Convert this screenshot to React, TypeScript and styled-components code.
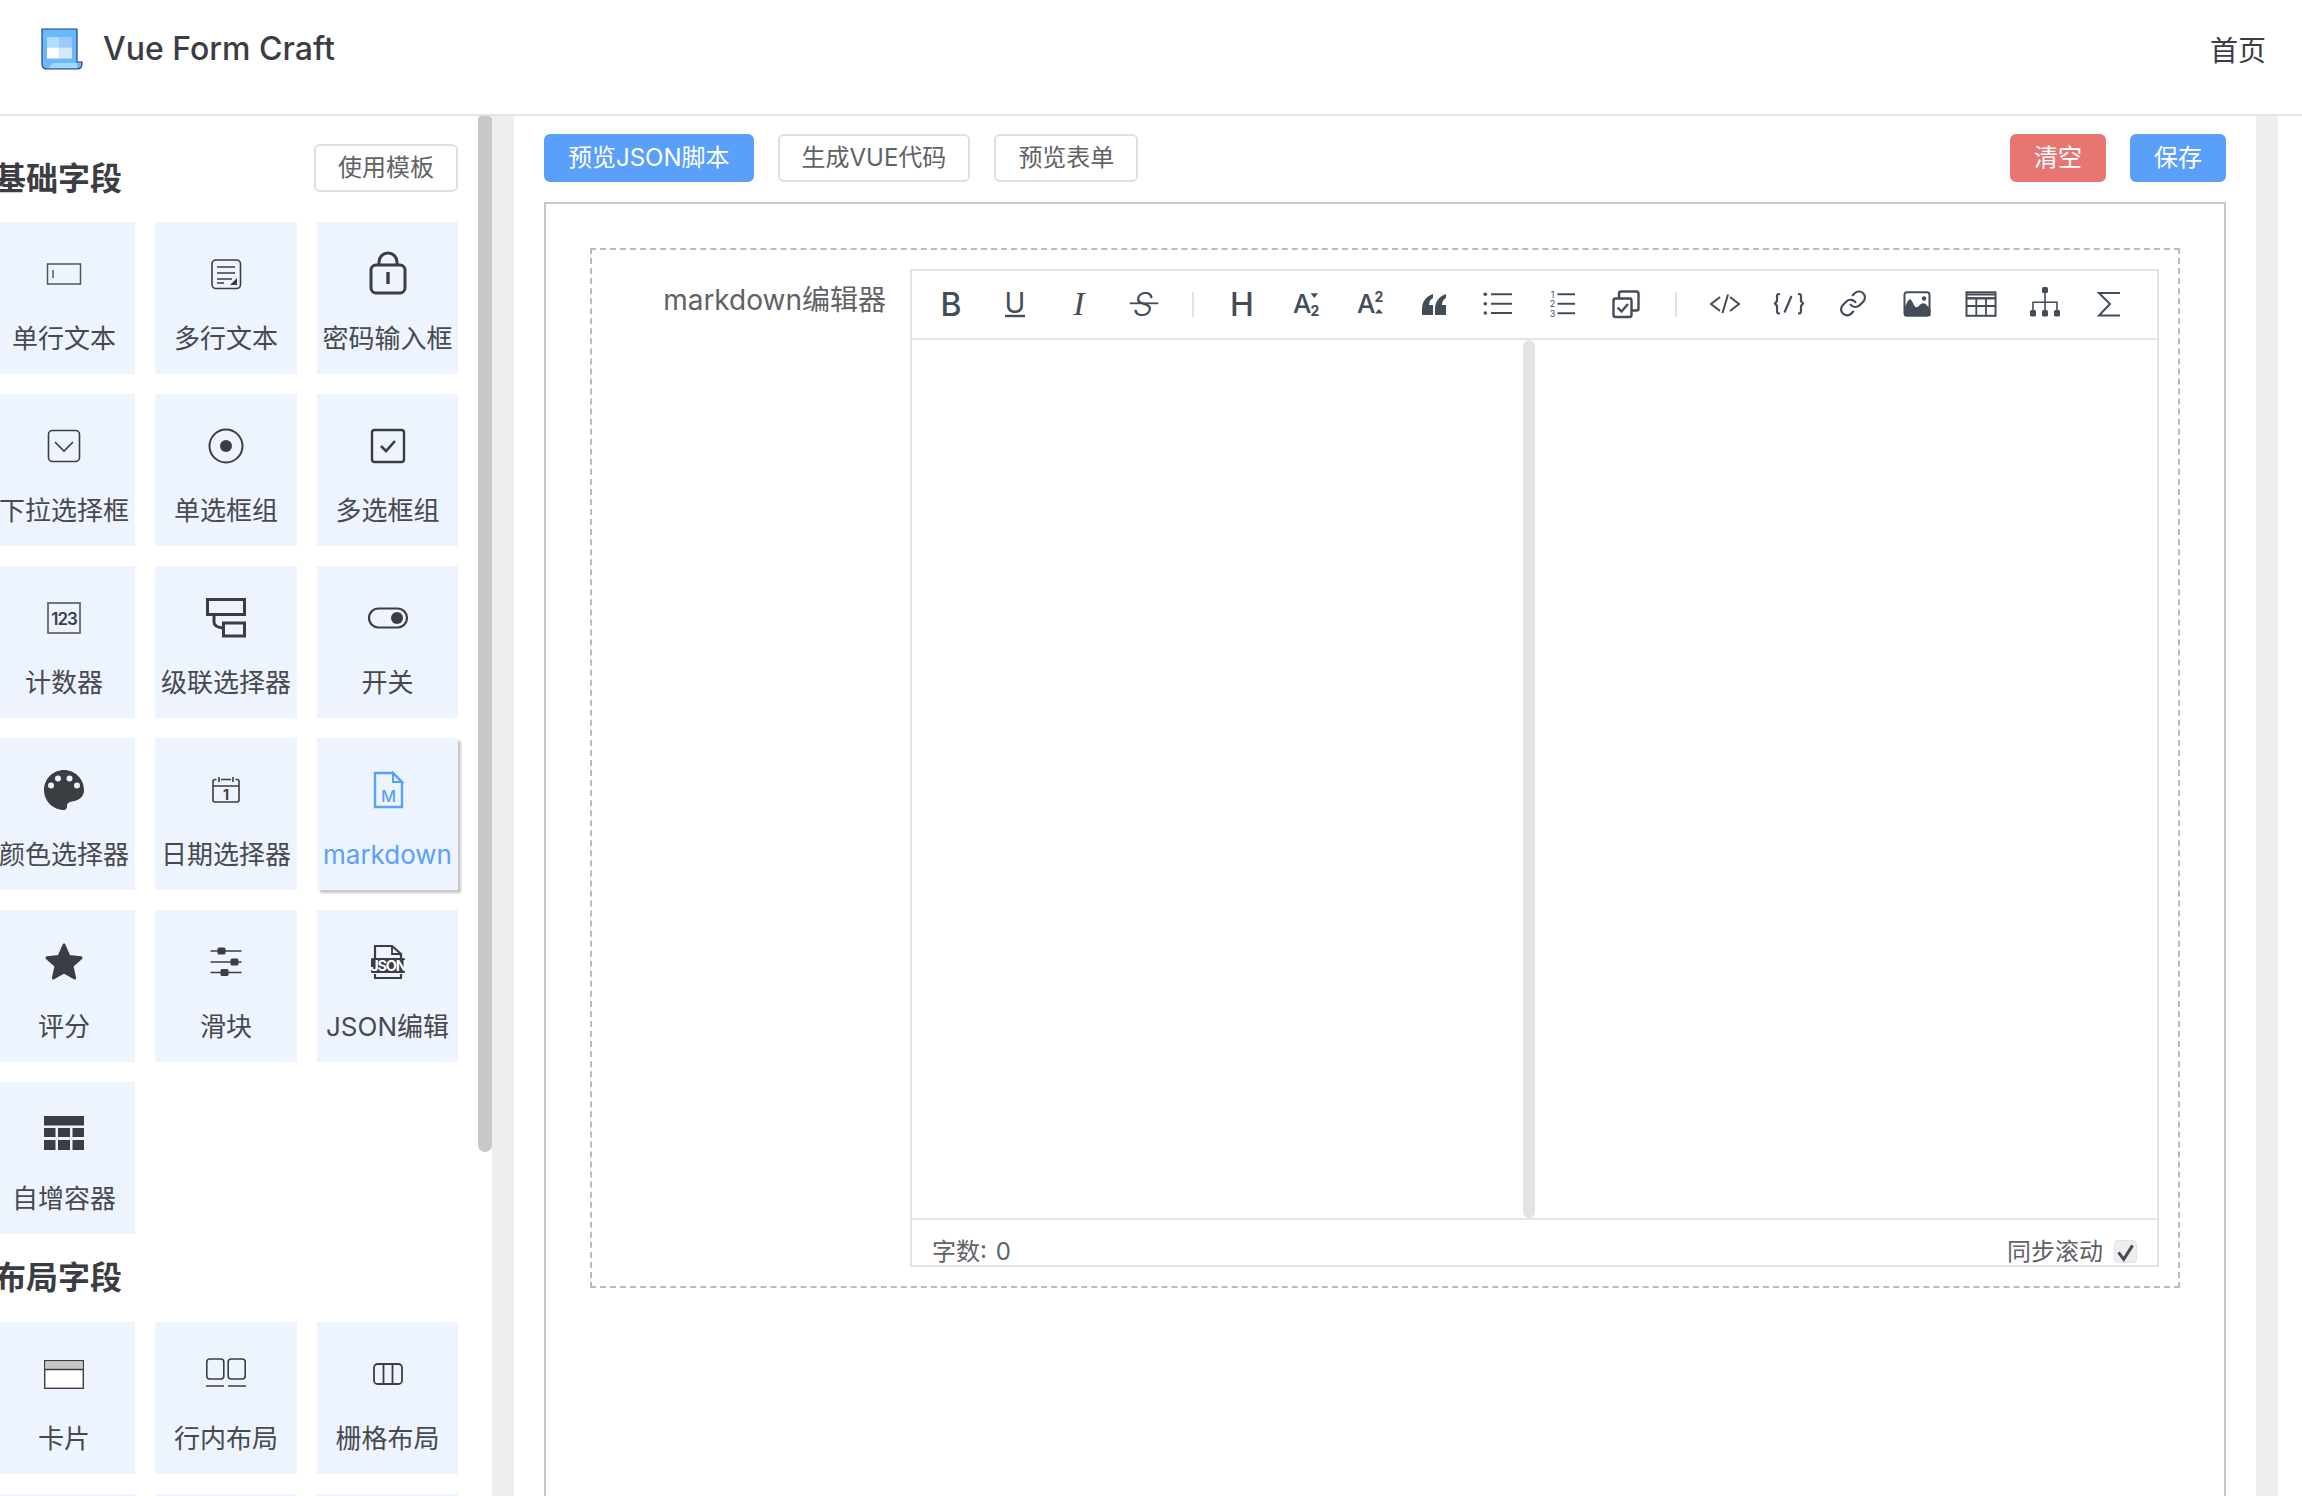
import React from 'react'
import styled, { createGlobalStyle } from 'styled-components'

const GlobalStyle = createGlobalStyle`
  html, body {
    margin: 0;
    padding: 0;
    height: 100%;
    overflow: hidden;
    background: #fff;
    font-family: Inter, "Noto Sans CJK SC", sans-serif;
  }
  * { box-sizing: border-box; }
`

const INK = '#3c3d43'
const TOOL = '#434d58'
const BLUE = '#5aa0fa'
const CARD = '#edf4fe'

// ---- card icons, all in a 48 box ----
const Logo = () => (
  <svg width="42" height="42" viewBox="0 0 42 42">
    <path d="M1 1H36V34H41V36Q41 41 36 41H6Q1 41 1 36Z" fill="#6bb9fd" stroke="#1d3f85" strokeWidth="1.2" />
    <path d="M12 35H36V40H8Q10 36 12 35Z" fill="#a9d6ff" />
    <rect x="6" y="9" width="12.5" height="10.5" fill="#b2dcff" />
    <rect x="18.5" y="9" width="12.5" height="10.5" fill="#9fc9fd" />
    <rect x="6" y="19.5" width="12.5" height="11" fill="#fff" />
    <rect x="18.5" y="19.5" width="12.5" height="11" fill="#d6e7ff" />
  </svg>
)

const cardIcons: Record<string, React.ReactNode> = {
  input: (
    <>
      <rect x="7.5" y="14" width="33" height="20" fill="none" stroke="#55565c" strokeWidth="1.5" />
      <path d="M13 20V28" stroke="#55565c" strokeWidth="1.5" />
    </>
  ),
  textarea: (
    <>
      <rect x="10" y="10" width="28.5" height="28.5" rx="4" fill="none" stroke={INK} strokeWidth="1.6" />
      <path d="M15 17H33M15 23H33M15 29H30M15 33H22" stroke={INK} strokeWidth="1.6" fill="none" />
      <path d="M35 28V35H28Z" fill={INK} />
    </>
  ),
  password: (
    <>
      <rect x="7" y="15" width="34" height="28" rx="5" fill="none" stroke={INK} strokeWidth="3" />
      <path d="M15 15V12A9 9 0 0 1 33 12V15" fill="none" stroke={INK} strokeWidth="3" />
      <path d="M24 22V34" stroke={INK} strokeWidth="3.4" />
    </>
  ),
  select: (
    <>
      <rect x="8.5" y="8.5" width="31" height="31" rx="4" fill="none" stroke={INK} strokeWidth="1.6" />
      <path d="M15 20L24 29L33 20" fill="none" stroke={INK} strokeWidth="1.6" />
    </>
  ),
  radio: (
    <>
      <circle cx="24" cy="24" r="16.5" fill="none" stroke={INK} strokeWidth="2" />
      <circle cx="24" cy="24" r="6" fill={INK} />
    </>
  ),
  checkbox: (
    <>
      <rect x="8" y="8" width="32" height="32" rx="2.5" fill="none" stroke={INK} strokeWidth="2.4" />
      <path d="M17 24L22 29L31 19" fill="none" stroke={INK} strokeWidth="2.6" />
    </>
  ),
  number: (
    <>
      <rect x="8" y="9" width="32" height="30" fill="none" stroke="#55565c" strokeWidth="1.6" />
      <text x="24" y="30.5" textAnchor="middle" fontSize="17" fontWeight="600" letterSpacing="-1" fill={INK}>123</text>
    </>
  ),
  cascader: (
    <>
      <rect x="5.5" y="5.5" width="37" height="15" fill="none" stroke={INK} strokeWidth="3" />
      <rect x="21.5" y="29" width="21" height="13" fill="none" stroke={INK} strokeWidth="3" />
      <path d="M12 21V28Q12 33 21 34" fill="none" stroke={INK} strokeWidth="3" />
    </>
  ),
  switch: (
    <>
      <rect x="5" y="14.5" width="38" height="19" rx="9.5" fill="none" stroke={INK} strokeWidth="2.2" />
      <circle cx="33" cy="24" r="6" fill={INK} />
    </>
  ),
  color: (
    <g transform="translate(24 24)">
      <path d="M0-20C-11-20-20-11-20 0C-20 11-11 20 0 20C2 20 3 18 3 16.5C3 13 5 12 8 11.5C15 10.5 20 7 20 0C20-11 11-20 0-20Z" fill={INK} />
      <circle cx="-13" cy="-4.5" r="3" fill={CARD} />
      <circle cx="-6" cy="-11.5" r="3" fill={CARD} />
      <circle cx="5.5" cy="-11.5" r="3" fill={CARD} />
      <circle cx="13" cy="-4.5" r="3" fill={CARD} />
    </g>
  ),
  date: (
    <>
      <path d="M14.5 13.5H13Q11 13.5 11 15.5V34Q11 36 13 36H35Q37 36 37 34V15.5Q37 13.5 35 13.5H33.5M19 13.5H29M11 20H37M17 11V16M31 11V16" fill="none" stroke={INK} strokeWidth="1.6" />
      <text x="24" y="33.5" textAnchor="middle" fontSize="14" fontWeight="700" fill={INK}>1</text>
    </>
  ),
  markdown: (
    <>
      <path d="M11 7H29L38 16V41H11Z" fill="none" stroke={BLUE} strokeWidth="2.4" />
      <path d="M29 7V16H38Z" fill="none" stroke={BLUE} strokeWidth="2" />
      <text x="24.5" y="36" textAnchor="middle" fontSize="16.5" fontWeight="500" fill={BLUE}>M</text>
    </>
  ),
  rate: (
    <path d="M24 7L29 18.5L41 19.8L32 28L34.6 40L24 34L13.4 40L16 28L7 19.8L19 18.5Z" fill={INK} stroke={INK} strokeWidth="3" strokeLinejoin="round" />
  ),
  slider: (
    <>
      <path d="M8.5 13H39.5M8.5 24H39.5M8.5 34.5H39.5" stroke={INK} strokeWidth="1.6" />
      <rect x="15.5" y="9.5" width="8" height="7" rx="1.5" fill={INK} />
      <rect x="28.5" y="20.5" width="8" height="7" rx="1.5" fill={INK} />
      <rect x="18.5" y="31" width="8" height="7" rx="1.5" fill={INK} />
    </>
  ),
  json: (
    <>
      <path d="M11 20V8H28L37 16V20M11 36V40H37V36" fill="none" stroke={INK} strokeWidth="2.2" />
      <path d="M28 8V16H37" fill="none" stroke={INK} strokeWidth="1.8" />
      <rect x="7" y="20" width="34" height="15" rx="1.5" fill={INK} />
      <text x="24" y="32.5" textAnchor="middle" fontSize="14.5" fontWeight="700" letterSpacing="-1.2" fill="#fff">JSON</text>
    </>
  ),
  group: (
    <>
      <rect x="4" y="6" width="40" height="9.5" fill={INK} />
      <rect x="4" y="18" width="11.5" height="9" fill={INK} />
      <rect x="18" y="18" width="12" height="9" fill={INK} />
      <rect x="32.5" y="18" width="11.5" height="9" fill={INK} />
      <rect x="4" y="30" width="11.5" height="10" fill={INK} />
      <rect x="18" y="30" width="12" height="10" fill={INK} />
      <rect x="32.5" y="30" width="11.5" height="10" fill={INK} />
    </>
  ),
  card: (
    <>
      <rect x="4.7" y="10.7" width="38.6" height="27.6" fill="#fff" stroke={INK} strokeWidth="1.4" />
      <rect x="5.4" y="11.4" width="37.2" height="7.6" fill="#c6c7c9" />
      <path d="M5 19.5H43" stroke={INK} strokeWidth="1.4" />
    </>
  ),
  inline: (
    <>
      <rect x="4.8" y="9" width="17" height="20" rx="3" fill="none" stroke={INK} strokeWidth="1.6" />
      <rect x="26.2" y="9" width="17" height="20" rx="3" fill="none" stroke={INK} strokeWidth="1.6" />
      <path d="M4 36H22M26 36H44" stroke={INK} strokeWidth="1.6" />
    </>
  ),
  grid: (
    <>
      <rect x="10" y="14" width="28" height="20" rx="3.5" fill="none" stroke={INK} strokeWidth="1.8" />
      <path d="M19.5 14V34M28.5 14V34" stroke={INK} strokeWidth="1.8" />
    </>
  ),
}

const basicFields = [
  { id: 'input', label: '单行文本' },
  { id: 'textarea', label: '多行文本' },
  { id: 'password', label: '密码输入框' },
  { id: 'select', label: '下拉选择框' },
  { id: 'radio', label: '单选框组' },
  { id: 'checkbox', label: '多选框组' },
  { id: 'number', label: '计数器' },
  { id: 'cascader', label: '级联选择器' },
  { id: 'switch', label: '开关' },
  { id: 'color', label: '颜色选择器' },
  { id: 'date', label: '日期选择器' },
  { id: 'markdown', label: 'markdown', active: true },
  { id: 'rate', label: '评分' },
  { id: 'slider', label: '滑块' },
  { id: 'json', label: 'JSON编辑' },
  { id: 'group', label: '自增容器' },
]

const layoutFields = [
  { id: 'card', label: '卡片' },
  { id: 'inline', label: '行内布局' },
  { id: 'grid', label: '栅格布局' },
]

// ---- editor toolbar icons, drawn around the middle of a 40 box ----
const line = { fill: 'none', stroke: TOOL, strokeWidth: 2 }

const toolGroups: React.ReactNode[][] = [
  [
    <text x="20" y="30.7" textAnchor="middle" fontSize="32" fontWeight="500" fill={TOOL}>B</text>,
    <>
      <text x="20" y="27.6" textAnchor="middle" fontSize="28" fontWeight="400" fill={TOOL}>U</text>
      <path d="M10 31H30" stroke={TOOL} strokeWidth="2.4" />
    </>,
    <text x="20" y="30" textAnchor="middle" fontSize="34" fontStyle="italic" fontFamily="'Liberation Serif', serif" fill={TOOL}>I</text>,
    <>
      <text x="20" y="31" textAnchor="middle" fontSize="32" fontStyle="italic" fontWeight="300" fill={TOOL}>S</text>
      <path d="M6.700 18.300H35.300" stroke={TOOL} strokeWidth="1.800" />
    </>,
  ],
  [
    <text x="20" y="30.7" textAnchor="middle" fontSize="32" fontWeight="500" fill={TOOL}>H</text>,
    <>
      <text x="7" y="28" fontSize="26" fontWeight="500" fill={TOOL}>A</text>
      <text x="24.500" y="30.700" fontSize="14" fontWeight="700" fill={TOOL}>2</text>
      <path d="M24.700 8.300H32L28.350 13Z" fill={TOOL} />
    </>,
    <>
      <text x="7" y="28" fontSize="26" fontWeight="500" fill={TOOL}>A</text>
      <text x="24.500" y="17" fontSize="14" fontWeight="700" fill={TOOL}>2</text>
      <path d="M25 28.500H33L29 24Z" fill={TOOL} />
    </>,
    <g transform="translate(20 20)">
      <path d="M-1-11C-7-9-12-4-12 4V10H-1V0H-5C-5-4-3-6-1-7Z" fill={TOOL} />
      <path d="M12-11C6-9 1-4 1 4V10H12V0H8C8-4 10-6 12-7Z" fill={TOOL} />
    </g>,
    <g transform="translate(20 20)">
      <circle cx="-12.700" cy="-10.700" r="1.800" fill={TOOL} />
      <circle cx="-12.700" cy="-1.300" r="1.800" fill={TOOL} />
      <circle cx="-12.700" cy="8" r="1.800" fill={TOOL} />
      <path d="M-7-10.700H14M-7-1.300H14M-7 8H14" {...line} />
    </g>,
    <g transform="translate(20 20)">
      <text x="-9.500" y="-7.500" textAnchor="middle" fontSize="9" fill={TOOL}>1</text>
      <text x="-9.500" y="2" textAnchor="middle" fontSize="9" fill={TOOL}>2</text>
      <text x="-9.500" y="11.500" textAnchor="middle" fontSize="9" fill={TOOL}>3</text>
      <path d="M-4.500-10.700H13M-4.500-1.300H13M-4.500 8.300H13" {...line} />
    </g>,
    <g transform="translate(20 20)" fill="none" stroke={TOOL} strokeWidth="2.400">
      <rect x="-12.500" y="-6.500" width="18" height="18.500" rx="2" />
      <path d="M-7-7V-11.500Q-7-13.500-5-13.500H10.500Q12.500-13.500 12.500-11.500V3.500Q12.500 5.500 10.500 5.500H6" />
      <path d="M-8.500 2.500L-4.500 6.500L2-1" />
    </g>,
  ],
  [
    <g transform="translate(20 20)" {...line}>
      <path d="M-5-8L-14-1L-5 6M5-8L14-1L5 6M3-10.500L-2.500 8" />
    </g>,
    <g transform="translate(20 20)" {...line} strokeWidth="2.200">
      <path d="M-9-11H-10Q-12-11-12-9V-4L-14-1.500L-12 1V6Q-12 8.500-10 8.500H-9M9-11H10Q12-11 12-9V-4L14-1.500L12 1V6Q12 8.500 10 8.500H9M2.500-9L-4.500 7.500" />
    </g>,
    <g transform="translate(5.600 4) scale(1.2)" fill="none" stroke={TOOL} strokeWidth="1.800" strokeLinecap="round">
      <path d="M10 13a5 5 0 0 0 7.54.54l3-3a5 5 0 0 0-7.07-7.07l-1.72 1.71" />
      <path d="M14 11a5 5 0 0 0-7.54-.54l-3 3a5 5 0 0 0 7.07 7.07l1.71-1.71" />
    </g>,
    <g transform="translate(20 20)">
      <rect x="-12.500" y="-12.700" width="25" height="23.500" rx="2.500" fill="none" stroke={TOOL} strokeWidth="2" />
      <path d="M-13 4C-11 0-9-5.700-7-5.700C-5-5.700-3 2.300-.7 2.300C2 2.300 3-1.700 6-1.700C9-1.700 11 2 13.500 4.300V11H-13Z" fill={TOOL} />
      <circle cx="7" cy="-6.500" r="2.200" fill={TOOL} />
    </g>,
    <g transform="translate(20 20)" fill="none" stroke={TOOL}>
      <rect x="-14.500" y="-12.700" width="29" height="23.500" strokeWidth="2" />
      <path d="M-14-6.700H14.500" strokeWidth="2.400" />
      <path d="M-14 1H14.500M-4.700-6.700V11M5-6.700V11" strokeWidth="1.800" />
      <path d="M-14-10.500H14.500" strokeWidth="2" />
    </g>,
    <g transform="translate(20 20)">
      <path d="M0-12V8M-12 6V-2.700H12V6" fill="none" stroke={TOOL} strokeWidth="1.600" />
      <rect x="-3" y="-18" width="6" height="6" rx="1.500" fill={TOOL} />
      <rect x="-15" y="5" width="6" height="6.500" rx="1.500" fill={TOOL} />
      <rect x="-3" y="5" width="6" height="6.500" rx="1.500" fill={TOOL} />
      <rect x="9" y="5" width="6" height="6.500" rx="1.500" fill={TOOL} />
    </g>,
    <g transform="translate(20 20)">
      <path d="M11-12H-10L1-1L-10 10.500H11" {...line} />
    </g>,
  ],
]

const App = () => (
  <>
    <GlobalStyle />
    <Page>
      <Header>
        <Logo />
        <Title>Vue Form Craft</Title>
        <HomeLink>首页</HomeLink>
      </Header>
      <Body>
        <Sidebar>
          <SidebarInner>
            <SectionHead>
              <SectionTitle>基础字段</SectionTitle>
              <Button>使用模板</Button>
            </SectionHead>
            <FieldGrid>
              {basicFields.map((f) => (
                <FieldCard key={f.id} $active={f.active}>
                  <svg width="48" height="48" viewBox="0 0 48 48">{cardIcons[f.id]}</svg>
                  <FieldLabel>{f.label}</FieldLabel>
                </FieldCard>
              ))}
            </FieldGrid>
            <LayoutTitle>布局字段</LayoutTitle>
            <FieldGrid>
              {layoutFields.map((f) => (
                <FieldCard key={f.id}>
                  <svg width="48" height="48" viewBox="0 0 48 48">{cardIcons[f.id]}</svg>
                  <FieldLabel>{f.label}</FieldLabel>
                </FieldCard>
              ))}
              <FieldCard />
              <FieldCard />
              <FieldCard />
            </FieldGrid>
          </SidebarInner>
          <ScrollThumb />
        </Sidebar>
        <Gutter />
        <Main>
          <ActionBar>
            <ActionGroup>
              <Button $tone="primary">预览JSON脚本</Button>
              <Button>生成VUE代码</Button>
              <Button>预览表单</Button>
            </ActionGroup>
            <ActionGroup>
              <Button $tone="danger">清空</Button>
              <Button $tone="primary">保存</Button>
            </ActionGroup>
          </ActionBar>
          <Canvas>
            <FormItem>
              <ItemLabel>markdown编辑器</ItemLabel>
              <Editor>
                <EditorToolbar>
                  {toolGroups.map((group, i) => (
                    <React.Fragment key={i}>
                      {group.map((icon, j) => (
                        <ToolButton key={j}>
                          <svg width="40" height="40" viewBox="0 0 40 40">{icon}</svg>
                        </ToolButton>
                      ))}
                      <ToolSeparator />
                    </React.Fragment>
                  ))}
                </EditorToolbar>
                <EditorBody>
                  <EditPane />
                  <SplitBar />
                </EditorBody>
                <EditorFooter>
                  <WordCount>字数: 0</WordCount>
                  <SyncScroll>
                    同步滚动
                    <SyncCheck>
                      <svg width="21" height="21" viewBox="0 0 24 24">
                        <path d="M4 13L10 21L20 5" fill="none" stroke={TOOL} strokeWidth="3.400" />
                      </svg>
                    </SyncCheck>
                  </SyncScroll>
                </EditorFooter>
              </Editor>
            </FormItem>
          </Canvas>
        </Main>
        <Gutter />
        <RightEdge />
      </Body>
    </Page>
  </>
)

const Page = styled.div`
  width: 2302px;
  height: 1496px;
  display: flex;
  flex-direction: column;
  overflow: hidden;
  color: ${INK};
`
const Header = styled.header`
  flex: 0 0 116px;
  display: flex;
  align-items: flex-start;
  padding: 28px 36px 0 41px;
  border-bottom: 2px solid #e4e4e4;
`
const Title = styled.div`
  margin-left: 20px;
  font-size: 32px;
  line-height: 42px;
  font-weight: 500;
`
const HomeLink = styled.a`
  margin-left: auto;
  font-size: 28px;
  line-height: 46px;
`
const Body = styled.div`
  flex: 1;
  display: flex;
  min-height: 0;
`
const Sidebar = styled.aside`
  position: relative;
  flex: 0 0 492px;
  overflow: hidden;
`
const SidebarInner = styled.div`
  width: 465px;
  margin-left: -7px;
`
const ScrollThumb = styled.div`
  position: absolute;
  top: 0;
  right: 0;
  width: 14px;
  height: 1036px;
  background: #c8c8c8;
  border-radius: 4px 4px 8px 8px;
`
const SectionHead = styled.div`
  height: 106px;
  padding-top: 28px;
  display: flex;
  align-items: flex-start;
  justify-content: space-between;
`
const SectionTitle = styled.h3`
  margin: 13px 0 0 1px;
  font-size: 32px;
  line-height: 44px;
  font-weight: 600;
`
const LayoutTitle = styled(SectionTitle)`
  margin: 22px 0 22px 1px;
`
const FieldGrid = styled.div`
  display: grid;
  grid-template-columns: 142px 142px 141px;
  gap: 20px;
`
const FieldCard = styled.div<{ $active?: boolean }>`
  height: 152px;
  padding-top: 28px;
  display: flex;
  flex-direction: column;
  align-items: center;
  background: ${CARD};
  color: ${(p) => (p.$active ? BLUE : '#48494f')};
  box-shadow: ${(p) => (p.$active ? '3px 3px 2px rgba(0, 0, 0, 0.22)' : 'none')};
`
const FieldLabel = styled.div`
  margin-top: 23px;
  font-size: 26px;
  line-height: 36px;
  white-space: nowrap;
`
const Gutter = styled.div`
  flex: 0 0 22px;
  background: #eeeeee;
`
const RightEdge = styled.div`
  flex: 1;
`
const Main = styled.main`
  flex: 0 0 1742px;
  min-width: 0;
  padding: 18px 30px 0;
  display: flex;
  flex-direction: column;
  min-height: 0;
`
const ActionBar = styled.div`
  display: flex;
  justify-content: space-between;
`
const ActionGroup = styled.div`
  display: flex;
  gap: 24px;
`
const toneColor = { primary: BLUE, danger: '#e77672' }
const Button = styled.button<{ $tone?: 'primary' | 'danger' }>`
  height: 48px;
  padding: 0 22px;
  font-family: inherit;
  font-size: 24px;
  line-height: 44px;
  border-radius: 6px;
  border: 2px solid ${(p) => (p.$tone ? toneColor[p.$tone] : '#dcdfe6')};
  background: ${(p) => (p.$tone ? toneColor[p.$tone] : '#fff')};
  color: ${(p) => (p.$tone ? '#fff' : '#606266')};
`
const Canvas = styled.div`
  flex: 1;
  margin-top: 20px;
  padding: 44px 44px 0;
  border: 2px solid #c8c8c8;
  border-bottom: 0;
`
const FormItem = styled.div`
  height: 1040px;
  padding: 19px 19px 19px 0;
  display: flex;
  border: 2px dashed #bbbbbb;
`
const ItemLabel = styled.label`
  flex: 0 0 318px;
  padding-right: 24px;
  text-align: right;
  font-size: 28px;
  line-height: 63px;
  color: #606266;
`
const Editor = styled.div`
  flex: 1;
  min-width: 0;
  display: flex;
  flex-direction: column;
  border: 2px solid #e4e4e4;
  color: #606266;
`
const EditorToolbar = styled.div`
  flex: 0 0 69px;
  display: flex;
  align-items: center;
  padding-left: 7px;
  border-bottom: 2px solid #e4e4e4;
  overflow: hidden;
`
const ToolButton = styled.div`
  flex: 0 0 64px;
  display: flex;
  justify-content: center;
`
const ToolSeparator = styled.div`
  flex: 0 0 35px;
  display: flex;
  justify-content: center;
  &::before {
    content: '';
    width: 2px;
    height: 25px;
    background: #e2e2e2;
  }
`
const EditorBody = styled.div`
  flex: 1;
  display: flex;
  min-height: 0;
`
const EditPane = styled.div`
  flex: 0 0 611px;
`
const SplitBar = styled.div`
  flex: 0 0 12px;
  background: #e4e4e4;
  border-radius: 6px;
`
const EditorFooter = styled.div`
  flex: 0 0 47px;
  display: flex;
  justify-content: space-between;
  padding: 17px 20px 0 20px;
  border-top: 2px solid #e4e4e4;
  font-size: 24px;
  line-height: 30px;
  overflow: hidden;
`
const WordCount = styled.span`
  word-spacing: 2px;
`
const SyncScroll = styled.div`
  display: flex;
  align-items: flex-start;
`
const SyncCheck = styled.div`
  width: 23px;
  height: 23px;
  margin: 3px 0 0 11px;
  display: flex;
  align-items: center;
  justify-content: center;
  background: #eeeeee;
  border: 1px solid #e4e4e4;
  border-radius: 4px;
`

export default App
